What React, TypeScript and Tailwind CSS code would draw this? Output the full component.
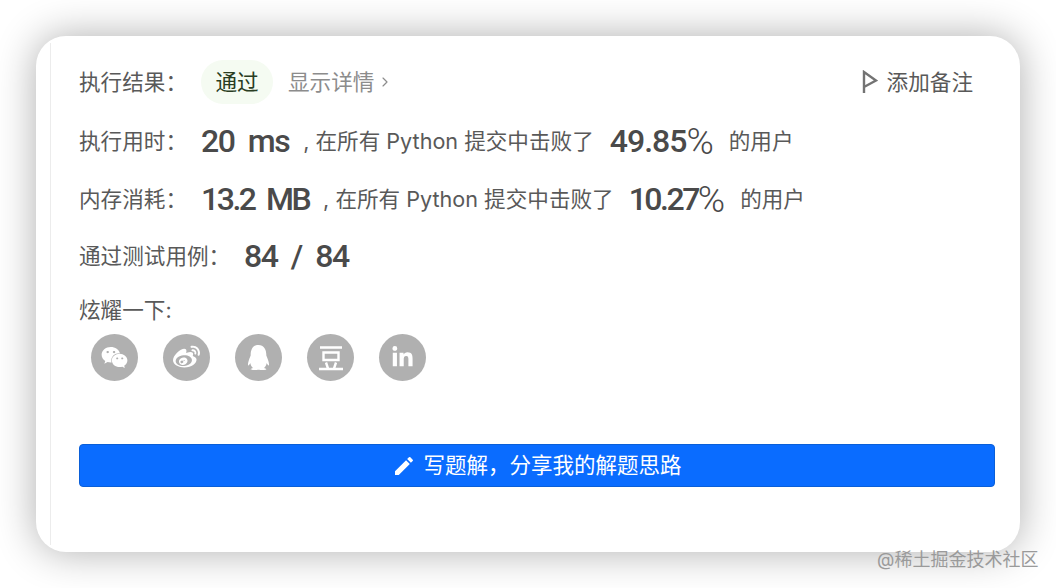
import { FaWeixin, FaWeibo, FaQq, FaLinkedinIn } from "react-icons/fa";
import { MdEdit } from "react-icons/md";
import { ChevronRight } from "lucide-react";

const cjk = "font-['Inter','Noto_Sans_CJK_SC',sans-serif]";
const num = "font-['Roboto','Noto_Sans_CJK_SC',sans-serif] font-medium text-[32px] text-[#4a4a4a]";

function Stat(props: { value: string; valueClass: string; percent: string; percentClass: string; label: string }) {
  return (
    <div className="flex items-center h-[40px] text-[21.6px] text-[#595959]">
      <span className="w-[122px]">{props.label}</span>
      <span className={`${num} ${props.valueClass} mr-[14px]`}>{props.value}</span>
      <span>, 在所有 Python 提交中击败了</span>
      <span className={`${num} ${props.percentClass} flex items-center`}>
        {props.percent}
        <span className="text-[37px] font-light leading-none tracking-normal">%</span>
      </span>
      <span>的用户</span>
    </div>
  );
}

function DoubanIcon() {
  return (
    <svg width="26" height="26" viewBox="0 0 26 26" fill="none" stroke="white" strokeWidth="2.4">
      <path d="M2 2.5h22M5.5 7.5h15v7.5h-15zM1 24h24M8 17.5l2 6M18 17.5l-2 6" />
    </svg>
  );
}

const shares = [
  { name: "wechat", icon: <FaWeixin size={27} /> },
  { name: "weibo", icon: <FaWeibo size={27} /> },
  { name: "qq", icon: <FaQq size={25} /> },
  { name: "douban", icon: <DoubanIcon /> },
  { name: "linkedin", icon: <FaLinkedinIn size={23} /> },
];

export default function App() {
  return (
    <div className={`relative w-[1056px] h-[588px] overflow-hidden bg-white pt-9 pl-9 ${cjk}`}>
      <div className="w-[984px] h-[516px] rounded-[30px] bg-white shadow-[0_0_40px_rgba(0,0,0,0.32)] pt-[7px] pb-[7px] pl-[14px]">
        {/* Result card */}
        <div className="h-full border-l border-[#ececec] pl-[28px] pr-[25px] pt-[17px]">
          <div className="flex items-center h-[44px] text-[21.6px] text-[#595959]">
            <span className="w-[122px]">执行结果：</span>
            <span className="flex items-center justify-center w-[72px] h-[44px] rounded-[22px] bg-[#f5fbf2] text-[#2a3d22]">通过</span>
            <span className="flex items-center ml-[15px] text-[#8c8c8c]">
              显示详情
              <ChevronRight size={16} strokeWidth={1.75} className="ml-[3px]" />
            </span>
            <span className="flex items-center ml-auto mr-[22px] text-[#595959]">
              <svg width="16" height="24" viewBox="0 0 16 24" fill="none" stroke="#737373" strokeWidth="2.4" className="mr-[9px]">
                <path d="M2 23V2l12 8.5L2 17" />
              </svg>
              添加备注
            </span>
          </div>
          <div className="mt-[17px]">
            <Stat
              label="执行用时："
              value="20 ms"
              valueClass="tracking-[-1.5px] [word-spacing:7px]"
              percent="49.85"
              percentClass="tracking-[-1px] ml-[16px] mr-[15px]"
            />
          </div>
          <div className="mt-[18px]">
            <Stat
              label="内存消耗："
              value="13.2 MB"
              valueClass="tracking-[-2.5px] [word-spacing:6px]"
              percent="10.27"
              percentClass="tracking-[-2.5px] ml-[15px] mr-[15px]"
            />
          </div>
          <div className="flex items-center h-[40px] mt-[17px] text-[21.6px] text-[#595959]">
            <span className="w-[165px]">通过测试用例：</span>
            <span className={`${num} tracking-[-1.5px] [word-spacing:7px]`}>84 / 84</span>
          </div>
          <div className="mt-[20px] text-[21.6px] leading-[28px] text-[#595959]">炫耀一下:</div>
          <div className="flex gap-[25px] ml-[12px] mt-[10px]">
            {shares.map((s) => (
              <div key={s.name} className="flex items-center justify-center w-[47px] h-[47px] rounded-full bg-[#b0b0b0] text-white">
                {s.icon}
              </div>
            ))}
          </div>
          <button className="flex items-center justify-center w-[916px] h-[43px] mt-[63px] rounded-[4px] bg-[#0a6cff] border border-[#0a5fd8] text-white text-[21.5px]">
            <MdEdit size={24} className="mr-[7px]" />
            写题解，分享我的解题思路
          </button>
        </div>
      </div>
      <span className="absolute left-[877px] top-[549px] text-[18px] leading-[22px] text-[#9a9a9a]">@稀土掘金技术社区</span>
    </div>
  );
}
